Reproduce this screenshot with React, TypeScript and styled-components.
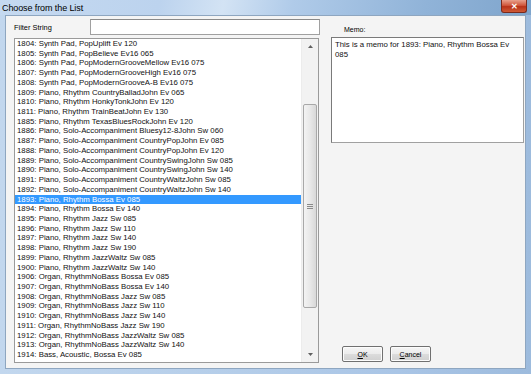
import styled, { createGlobalStyle } from "styled-components";

const GlobalStyle = createGlobalStyle`
  html, body {
    margin: 0;
    padding: 0;
    background: #ffffff;
  }
  body {
    font-family: "Liberation Sans", Arial, sans-serif;
  }
`;

const items = [
  "1804: Synth Pad, PopUplift Ev 120",
  "1805: Synth Pad, PopBelieve Ev16 065",
  "1806: Synth Pad, PopModernGrooveMellow Ev16 075",
  "1807: Synth Pad, PopModernGrooveHigh Ev16 075",
  "1808: Synth Pad, PopModernGrooveA-B Ev16 075",
  "1809: Piano, Rhythm CountryBalladJohn Ev 065",
  "1810: Piano, Rhythm HonkyTonkJohn Ev 120",
  "1811: Piano, Rhythm TrainBeatJohn Ev 130",
  "1885: Piano, Rhythm TexasBluesRockJohn Ev 120",
  "1886: Piano, Solo-Accompaniment Bluesy12-8John Sw 060",
  "1887: Piano, Solo-Accompaniment CountryPopJohn Ev 085",
  "1888: Piano, Solo-Accompaniment CountryPopJohn Ev 120",
  "1889: Piano, Solo-Accompaniment CountrySwingJohn Sw 085",
  "1890: Piano, Solo-Accompaniment CountrySwingJohn Sw 140",
  "1891: Piano, Solo-Accompaniment CountryWaltzJohn Sw 085",
  "1892: Piano, Solo-Accompaniment CountryWaltzJohn Sw 140",
  "1893: Piano, Rhythm Bossa Ev 085",
  "1894: Piano, Rhythm Bossa Ev 140",
  "1895: Piano, Rhythm Jazz Sw 085",
  "1896: Piano, Rhythm Jazz Sw 110",
  "1897: Piano, Rhythm Jazz Sw 140",
  "1898: Piano, Rhythm Jazz Sw 190",
  "1899: Piano, Rhythm JazzWaltz Sw 085",
  "1900: Piano, Rhythm JazzWaltz Sw 140",
  "1906: Organ, RhythmNoBass Bossa Ev 085",
  "1907: Organ, RhythmNoBass Bossa Ev 140",
  "1908: Organ, RhythmNoBass Jazz Sw 085",
  "1909: Organ, RhythmNoBass Jazz Sw 110",
  "1910: Organ, RhythmNoBass Jazz Sw 140",
  "1911: Organ, RhythmNoBass Jazz Sw 190",
  "1912: Organ, RhythmNoBass JazzWaltz Sw 085",
  "1913: Organ, RhythmNoBass JazzWaltz Sw 140",
  "1914: Bass, Acoustic, Bossa Ev 085",
  "1915: Bass, Acoustic, Bossa Ev 140",
];

const Window = styled.div`
  width: 531px;
  height: 374px;
  display: flex;
  flex-direction: column;
  background: linear-gradient(90deg, #c2d7ee 0%, #b4cde9 45%, #a9c5e6 75%, #9dbbdd 100%);
  overflow: hidden;
`;

const TitleBar = styled.div`
  height: 15px;
  flex: none;
  display: flex;
  align-items: center;
  justify-content: space-between;
  padding-left: 2px;
  background: linear-gradient(
    100deg,
    #c5d9f0 0%,
    #bcd3ee 30%,
    #d3e3f4 42%,
    #b0cbe9 55%,
    #90b3d8 80%,
    #7fa5cc 100%
  );
`;

const Title = styled.span`
  font-size: 9px;
  color: #000;
  letter-spacing: -0.1px;
`;

const CloseButton = styled.div`
  width: 26px;
  height: 13px;
  margin-right: 4px;
  align-self: flex-start;
  border: 1px solid #7a2a1c;
  border-top: none;
  border-radius: 0 0 3px 3px;
  background: linear-gradient(180deg, #e8a08c 0%, #d0573c 45%, #b83218 55%, #cf5a36 100%);
  display: flex;
  align-items: center;
  justify-content: center;
  color: #fff;
  font-size: 8px;
  font-weight: bold;
  box-sizing: border-box;
`;

const Frame = styled.div`
  flex: 1;
  min-height: 0;
  padding: 0 5px 5px 5px;
  display: flex;
`;

const Content = styled.div`
  flex: 1;
  min-height: 0;
  background: #f4f4f4;
  border: 1px solid #8ea6c0;
  display: grid;
  grid-template-columns: 305px 193px;
  grid-template-rows: minmax(0, 1fr);
  column-gap: 12px;
  padding: 3px 0 5px 8px;
`;

const LeftCol = styled.div`
  display: flex;
  flex-direction: column;
  min-height: 0;
`;

const FilterRow = styled.div`
  display: flex;
  align-items: center;
  height: 16px;
  margin-bottom: 3px;
`;

const Label = styled.span`
  font-size: 7.4px;
  color: #000;
  width: 76px;
  flex: none;
`;

const FilterInput = styled.div`
  flex: 1;
  height: 16px;
  box-sizing: border-box;
  background: #fff;
  border: 1px solid #a0a0a0;
  border-top-color: #8a8a8a;
  margin-right: -1px;
`;

const ListBox = styled.div`
  flex: 1;
  display: flex;
  background: #fff;
  border: 1px solid #9a9a9a;
  overflow: hidden;
  min-height: 0;
`;

const Rows = styled.div`
  flex: 1;
  overflow: hidden;
`;

const Row = styled.div<{ $selected?: boolean }>`
  height: 9.72px;
  line-height: 9.72px;
  font-size: 7.8px;
  padding-left: 2px;
  white-space: nowrap;
  color: ${(p) => (p.$selected ? "#ffffff" : "#111")};
  background: ${(p) => (p.$selected ? "#3399ff" : "transparent")};
`;

const ScrollBar = styled.div`
  width: 16px;
  flex: none;
  display: flex;
  flex-direction: column;
  background: #f2f2f2;
  border-left: 1px solid #ececec;
`;

const Arrow = styled.div`
  height: 15px;
  display: flex;
  align-items: center;
  justify-content: center;
  flex: none;
`;

const Track = styled.div`
  flex: 1;
  display: flex;
  flex-direction: column;
  padding: 50px 1px 39px 1px;
`;

const Thumb = styled.div`
  flex: 1;
  border: 1px solid #a8a8a8;
  border-radius: 2px;
  background: linear-gradient(90deg, #f3f3f3 0%, #e8e8e8 50%, #d8d8d8 100%);
  display: flex;
  align-items: center;
  justify-content: center;
`;

const RightCol = styled.div`
  display: flex;
  flex-direction: column;
  min-height: 0;
`;

const MemoLabel = styled.span`
  font-size: 7px;
  color: #000;
  margin: 7px 0 0 13px;
  height: 11px;
`;

const MemoBox = styled.div`
  height: 106px;
  box-sizing: border-box;
  background: #fff;
  border: 1px solid #a0a0a0;
  border-top-color: #7a7a7a;
  border-left-color: #7a7a7a;
  padding: 2px 3px;
  font-size: 7.8px;
  line-height: 9.7px;
  color: #111;
`;

const ButtonRow = styled.div`
  margin-top: auto;
  display: flex;
  gap: 7px;
  padding-left: 11px;
  margin-bottom: 1px;
`;

const Button = styled.div`
  width: 41px;
  height: 16px;
  box-sizing: border-box;
  border: 1px solid #707070;
  border-radius: 2px;
  background: linear-gradient(180deg, #f6f6f6 0%, #ebebeb 50%, #dcdcdc 51%, #d0d0d0 100%);
  box-shadow: inset 0 0 0 1px #fcfcfc;
  font-size: 7px;
  color: #000;
  display: flex;
  align-items: center;
  justify-content: center;
`;

const Key = styled.span`
  text-decoration: underline;
`;

export default function App() {
  return (
    <>
      <GlobalStyle />
      <Window>
        <TitleBar>
          <Title>Choose from the List</Title>
          <CloseButton>✕</CloseButton>
        </TitleBar>
        <Frame>
          <Content>
            <LeftCol>
              <FilterRow>
                <Label>Filter String</Label>
                <FilterInput />
              </FilterRow>
              <ListBox>
                <Rows>
                  {items.map((t) => (
                    <Row key={t} $selected={t.startsWith("1893")}>
                      {t}
                    </Row>
                  ))}
                </Rows>
                <ScrollBar>
                  <Arrow>
                    <svg width="5" height="3" viewBox="0 0 5 3">
                      <path d="M0 3 L2.5 0 L5 3 Z" fill="#606060" />
                    </svg>
                  </Arrow>
                  <Track>
                    <Thumb>
                      <svg width="6" height="5" viewBox="0 0 6 5">
                        <path d="M0 0.5 H6 M0 2.5 H6 M0 4.5 H6" stroke="#8a8a8a" strokeWidth="1" />
                      </svg>
                    </Thumb>
                  </Track>
                  <Arrow>
                    <svg width="5" height="3" viewBox="0 0 5 3">
                      <path d="M0 0 L2.5 3 L5 0 Z" fill="#606060" />
                    </svg>
                  </Arrow>
                </ScrollBar>
              </ListBox>
            </LeftCol>
            <RightCol>
              <MemoLabel>Memo:</MemoLabel>
              <MemoBox>This is a memo for 1893: Piano, Rhythm Bossa Ev 085</MemoBox>
              <ButtonRow>
                <Button>
                  <Key>O</Key>K
                </Button>
                <Button>
                  <Key>C</Key>ancel
                </Button>
              </ButtonRow>
            </RightCol>
          </Content>
        </Frame>
      </Window>
    </>
  );
}
